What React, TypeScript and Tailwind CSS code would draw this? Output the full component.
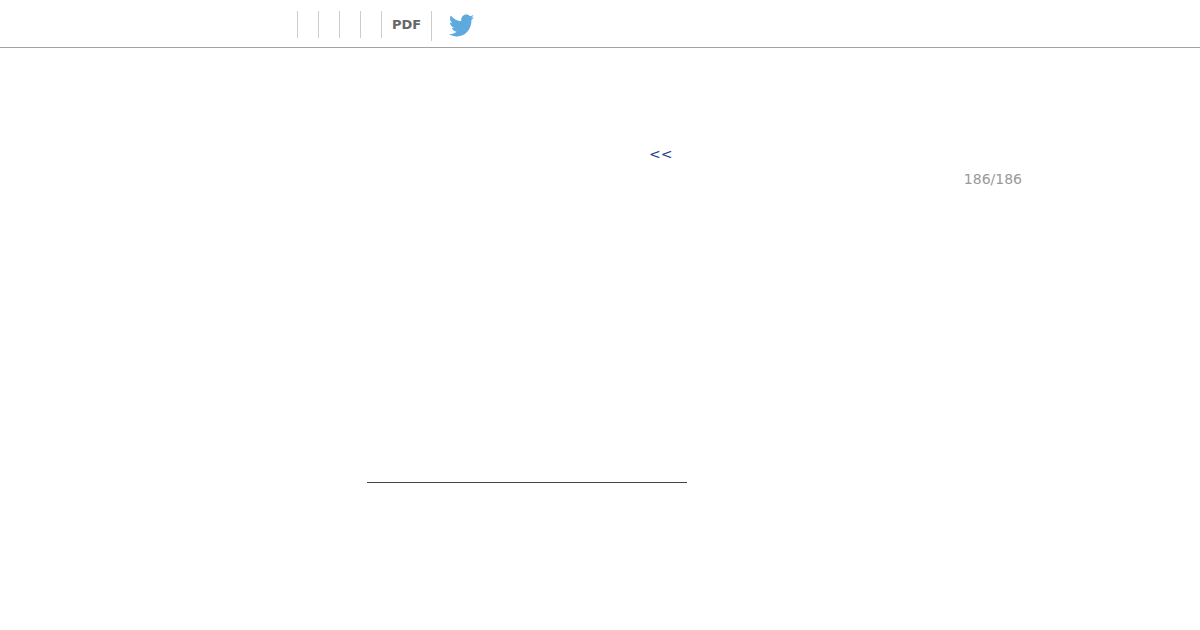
import { FaTwitter } from 'react-icons/fa'

const font = { fontFamily: '"DejaVu Sans", sans-serif' }

export default function App() {
  return (
    <div className="h-[630px] w-[1200px] overflow-hidden bg-white font-['DejaVu_Sans',sans-serif]" style={font}>
      <header className="flex h-[48px] border-b border-[#a3a3a3] pl-[297px] pt-[11px]">
        <div className="h-[27px] w-[21px] border-l border-[#cccccc]" />
        <div className="h-[27px] w-[21px] border-l border-[#cccccc]" />
        <div className="h-[27px] w-[21px] border-l border-[#cccccc]" />
        <div className="h-[27px] w-[21px] border-l border-[#cccccc]" />
        <div className="h-[27px] border-l border-[#cccccc] pl-[10px] pr-[10px] text-[13px] leading-[27px] font-bold text-[#666666]">
          PDF
        </div>
        <div className="flex h-[30px] items-start border-l border-[#cccccc] pl-[17px] pt-[1px]">
          <FaTwitter preserveAspectRatio="none" className="h-[27px] w-[25px] text-[#5ea9dd]" />
        </div>
      </header>
      <main className="flex flex-col">
        <a className="ml-[649px] mt-[96px] text-[14px] leading-[20px] text-[#1a3e8c]">&lt;&lt;</a>
        <div className="mr-[178px] mt-[5px] text-right text-[14px] leading-[20px] text-[#999999]">186/186</div>
        <div className="ml-[367px] mt-[293px] h-px w-[320px] bg-[#444444]" />
      </main>
    </div>
  )
}
